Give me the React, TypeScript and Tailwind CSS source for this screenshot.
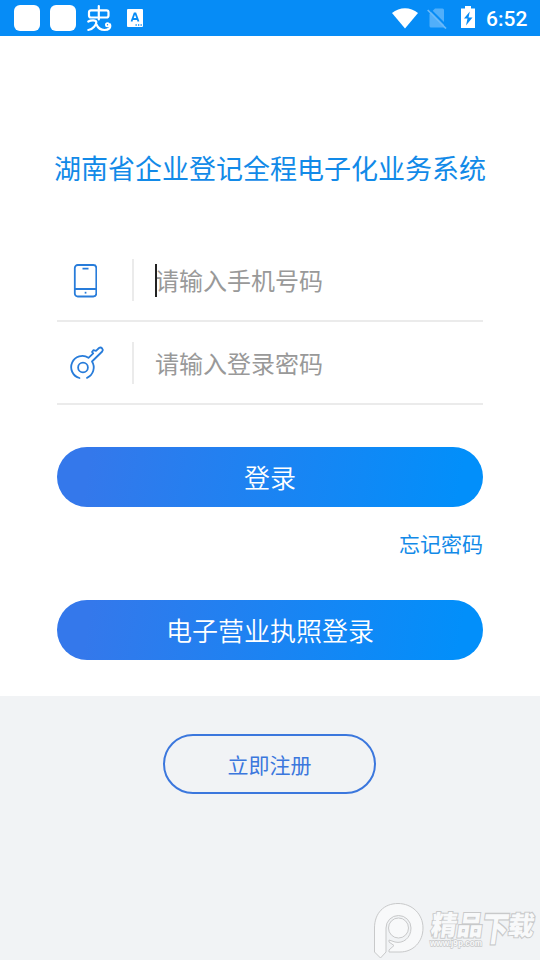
import React from 'react';

interface FieldProps {
  icon: React.ReactNode;
  placeholder: string;
  focused?: boolean;
}

const StatusBar: React.FC = () => (
  <div className="flex h-9 items-center justify-between bg-[#068cf6] pl-3.5 pr-3 text-white">
    <div className="flex items-center">
      <div className="h-[26px] w-[26px] rounded-[6px] bg-white" />
      <div className="ml-2.5 h-[26px] w-[26px] rounded-[6px] bg-white" />
      <svg viewBox="0 0 26 28" className="ml-2.5 h-7 w-[26px]" fill="none" stroke="white" strokeWidth="2.2" strokeLinecap="round" strokeLinejoin="round">
        <path d="M12.800 2V15.500M5 6.300H20.500a2 2 0 0 1 2 2V11.500a2 2 0 0 1-2 2H5a2 2 0 0 1-2-2V8.300a2 2 0 0 1 2-2z" />
        <path d="M2.300 17.500C5 16 10 15.800 10.300 18C10.500 20.500 7 25.500 2.300 26M10.500 20.500C12 24 14 26 18.500 26C23 26 25 23.500 24 20.500" />
        <circle cx="21.500" cy="20.800" r="1.600" strokeWidth="1.800" />
      </svg>
      <svg viewBox="0 0 16 18" className="ml-[15px] h-[18px] w-4">
        <rect width="16" height="18" rx="1" fill="white" />
        <path d="M4.500 12.500 7.500 4.500h1l3 8M5.600 10h4.800" fill="none" stroke="#068cf6" strokeWidth="1.800" />
        <path d="M8.500 16h1.300M11 16h1.300M13.500 16h1.300" stroke="#068cf6" strokeWidth="1.500" />
      </svg>
    </div>
    <div className="flex items-center">
      <svg viewBox="0 0 26 21" className="h-[21px] w-[26px]">
        <path d="M0 5C7.500-1.500 18.500-1.500 26 5L13 20.500z" fill="white" />
      </svg>
      <svg viewBox="0 0 20 21" className="ml-[9px] h-[21px] w-5">
        <path d="M8 .5H15.500q1.500 0 1.500 1.500V19.500H4q-1.500 0-1.500-1.500V6z" fill="#51affa" />
        <path d="M2.500 1 20 18.500" stroke="#068cf6" strokeWidth="2" />
        <path d="M.7 2 19 20.500" stroke="#6abafa" strokeWidth="1.700" />
      </svg>
      <svg viewBox="0 0 14 22" className="relative -top-px ml-[14px] h-[22px] w-3.5">
        <path d="M4 0h6v2.500h4V22H0V2.500h4z" fill="white" />
        <path d="M8.800 5.500 3 12.500h3.500L5 19.500 11.500 11.500H7.500z" fill="#068cf6" />
      </svg>
      <span className="relative top-px ml-[11px] w-[42px] whitespace-nowrap font-[Roboto] text-[21px] font-medium leading-9">6:52</span>
    </div>
  </div>
);

const PhoneIcon = () => (
  <svg viewBox="0 0 24 34" className="mt-[5px] ml-4 h-[34px] w-6" fill="none" stroke="#287cda" strokeWidth="1.800">
    <rect x="1.800" y="1" width="21.500" height="31.500" rx="3" />
    <path d="M2 25h21M9.500 4.700h6" />
    <path d="M11.700 28.700h1.700" />
  </svg>
);

const KeyIcon = () => (
  <svg viewBox="0 0 36 36" className="mt-[3px] ml-3 h-9 w-9" fill="none" stroke="#287cda" strokeWidth="1.800" strokeLinecap="round" strokeLinejoin="round">
    <circle cx="14" cy="22.500" r="4.900" />
    <path d="M10.500 33A11.200 11.200 0 1 1 19.500 12.800L24.200 8.300 23 7 24.500 5.200 27 5.800 30 3A2.400 2.400 0 0 1 33.200 6.500L23 16.500A11.200 11.200 0 0 1 18 32.800" />
  </svg>
);

const Field: React.FC<FieldProps> = ({ icon, placeholder, focused = false }) => (
  <div className="flex h-[83px] border-b-2 border-[#ebebeb] pt-5">
    <div className="w-[75px]">{icon}</div>
    <div className="h-[42px] w-0.5 bg-[#ebebeb]" />
    <div className="relative ml-[21px] h-[42px] text-2xl leading-[42px] text-[#999]">
      {focused && <span className="absolute top-[5px] left-0 h-[33px] w-0.5 bg-[#222]" />}
      <span>{placeholder}</span>
    </div>
  </div>
);

const GradientButton: React.FC<{ label: string }> = ({ label }) => (
  <button className="block h-[60px] w-full rounded-full bg-linear-[100deg,#3478eb_8%,#028ffa_94%] text-[26px] font-[350] leading-[58px] text-white">
    {label}
  </button>
);

const Watermark = () => (
  <svg viewBox="0 0 170 60" className="absolute right-0 bottom-0 h-[60px] w-[170px]" fill="#f8f9fa" stroke="#c8c9ca" strokeWidth="1">
    <path fillRule="evenodd" d="M4.500 28C4.500 13 14 3.500 28 3.500S53 14 53 28 43 52 30 52H19V50L24 45.500 19 42V40L25 42C33 44 41 38 41 28A12.500 12.500 0 0 0 16 28V52L10.500 58 4.500 52z" />
    <circle cx="28.500" cy="28" r="10" />
    {/* Slanted site name over its address */}
    <g transform="skewX(-8)" strokeWidth="2" paintOrder="stroke" className="font-['Noto_Sans_CJK_SC',sans-serif]">
      <text x="65" y="35.500" fontSize="27" fontWeight="900" textLength="52" lengthAdjust="spacingAndGlyphs">精品</text>
      <text transform="translate(116.500 41) scale(1 1.320)" fontSize="26" fontWeight="900">下</text>
      <text x="142" y="35.500" fontSize="26" fontWeight="900">载</text>
    </g>
    <text x="60" y="46" fontSize="9.500" fontWeight="700" textLength="52" lengthAdjust="spacingAndGlyphs" strokeWidth="1.500" paintOrder="stroke" className="font-['Liberation_Sans',sans-serif]">www.j9p.com</text>
  </svg>
);

export default function App() {
  return (
    <div className="relative flex h-[960px] w-[540px] flex-col overflow-hidden bg-white font-['Noto_Sans_CJK_SC',sans-serif]">
      <StatusBar />
      <main className="h-[660px] px-[57px] pt-[112px]">
        <h1 className="-mx-3 h-10 whitespace-nowrap text-center text-[27px] leading-10 text-[#128ae8]">
          湖南省企业登记全程电子化业务系统
        </h1>
        <div className="mt-[51px]">
          <Field icon={<PhoneIcon />} placeholder="请输入手机号码" focused />
          <Field icon={<KeyIcon />} placeholder="请输入登录密码" />
        </div>
        <div className="mt-[42px]">
          <GradientButton label="登录" />
          <div className="mt-5 h-[33px] text-right text-[21px] leading-8 text-[#128ae8]">忘记密码</div>
          <div className="mt-10">
            <GradientButton label="电子营业执照登录" />
          </div>
        </div>
      </main>
      <footer className="flex-1 bg-[#f1f3f5] pt-[38px]">
        <button className="ml-[163px] block h-[60px] w-[213px] rounded-full border-2 border-[#3b77dd] text-[21px] leading-[56px] text-[#3b77dd]">
          立即注册
        </button>
      </footer>
      <Watermark />
    </div>
  );
}
